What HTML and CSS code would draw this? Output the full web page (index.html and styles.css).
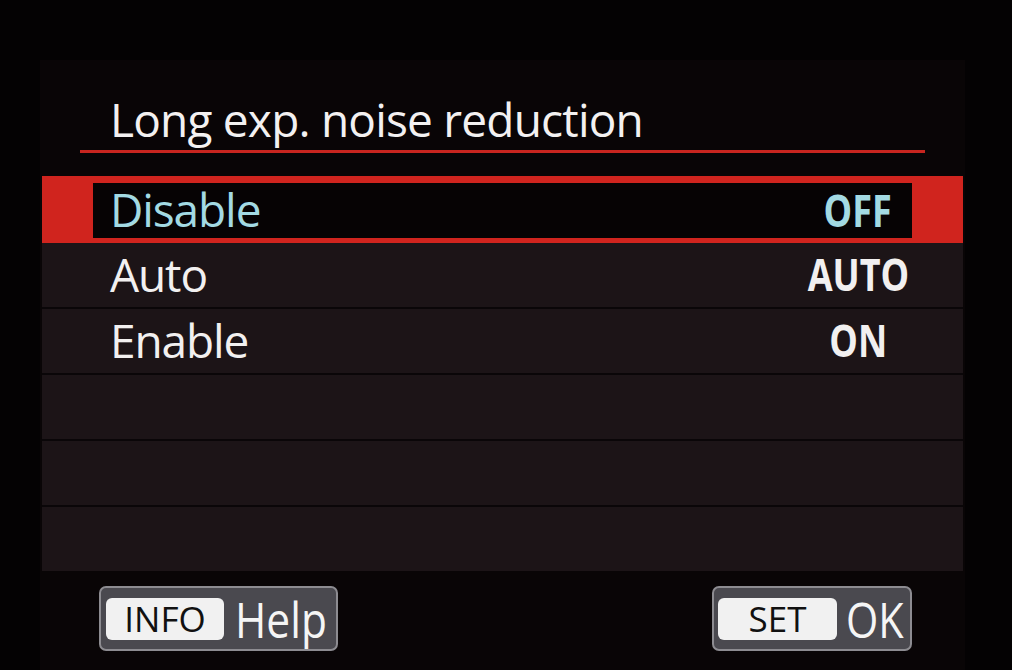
FILE: index.html
```html
<!DOCTYPE html>
<html>
<head>
<meta charset="utf-8">
<link rel="stylesheet" href="styles.css">
</head>
<body>
<div class="screen">
  <div class="panel">
    <div class="header"><h1 class="title">Long exp. noise reduction</h1></div>
    <ul class="menu">
      <li class="row selected"><div class="row-inner"><span class="label">Disable</span><span class="value"><span class="val-text">OFF</span></span></div></li>
      <li class="row"><div class="row-inner"><span class="label">Auto</span><span class="value"><span class="val-text">AUTO</span></span></div></li>
      <li class="row"><div class="row-inner"><span class="label">Enable</span><span class="value"><span class="val-text">ON</span></span></div></li>
      <li class="row"><div class="row-inner"></div></li>
      <li class="row"><div class="row-inner"></div></li>
      <li class="row"><div class="row-inner"></div></li>
    </ul>
    <div class="footer">
      <div class="btn btn-info"><span class="key">INFO</span><span class="act">Help</span></div>
      <div class="btn btn-set"><span class="key">SET</span><span class="act">OK</span></div>
    </div>
  </div>
</div>
</body>
</html>
```
FILE: styles.css
```css
html, body {
  margin: 0;
  padding: 0;
  background: #040203;
  font-family: "Open Sans", "Noto Sans", sans-serif;
}

.screen {
  width: 1012px;
  height: 670px;
  box-sizing: border-box;
  padding-top: 60px;
  display: flex;
  flex-direction: column;
  background: #040203;
  overflow: hidden;
}

.panel {
  flex: 1;
  margin: 0 47px 0 40px;
  background: #090506;
  display: flex;
  flex-direction: column;
  padding-top: 28px;
}

.header {
  margin-left: 40px;
  width: 845px;
  border-bottom: 3px solid #c7251f;
}

.title {
  margin: 0;
  padding-left: 30px;
  font-size: 46px;
  font-weight: 400;
  line-height: 62px;
  letter-spacing: -0.8px;
  color: #f3f1f1;
}

.menu {
  list-style: none;
  margin: 23px 0 0 2px;
  padding: 0;
  width: 921px;
}

.row {
  height: 64px;
  background: #1c1417;
  display: flex;
}

.row:not(.selected) + .row {
  border-top: 2px solid #0a0608;
}

.row-inner {
  flex: 1;
  display: flex;
  align-items: center;
  padding-left: 68px;
  padding-bottom: 3px;
}

.row.selected {
  height: 55px;
  padding: 7px 51px 5px 51px;
  background: #d0241e;
}

.selected .row-inner {
  background: #060304;
  padding-left: 17px;
}

.label {
  flex: 1;
  font-size: 46px;
  line-height: 1;
  letter-spacing: -1.1px;
  color: #f2f0f0;
}

.selected .label,
.selected .val-text {
  color: #a3dae3;
}

.value {
  width: 100px;
  margin-right: 55px;
  display: flex;
  justify-content: center;
}

.selected .value {
  margin-right: 4px;
}

.val-text {
  display: inline-block;
  flex-shrink: 0;
  font-size: 45px;
  font-weight: 700;
  line-height: 1;
  color: #f2f0f0;
  transform: scaleX(0.8);
}

.footer {
  margin-top: 15px;
  padding: 0 53px 0 59px;
  display: flex;
  justify-content: space-between;
}

.btn {
  height: 65px;
  box-sizing: border-box;
  border: 2px solid #8d8c91;
  border-radius: 7px;
  background: #4a494f;
  display: flex;
  align-items: center;
  padding-left: 5px;
  overflow: hidden;
}

.btn-info {
  width: 239px;
}

.btn-set {
  width: 200px;
  padding-left: 4px;
}

.key {
  width: 118px;
  height: 42px;
  border-radius: 6px;
  background: #f1f1f1;
  color: #111;
  font-size: 35px;
  line-height: 1;
  display: flex;
  align-items: center;
  justify-content: center;
  flex-shrink: 0;
}

.btn-set .key {
  width: 119px;
}

.act {
  display: inline-block;
  margin-left: 11px;
  font-size: 50px;
  line-height: 1;
  color: #f5f5f5;
  transform: scaleX(0.85);
  transform-origin: left center;
}

.btn-set .act {
  margin-left: 9px;
  transform: scaleX(0.83);
}
```
